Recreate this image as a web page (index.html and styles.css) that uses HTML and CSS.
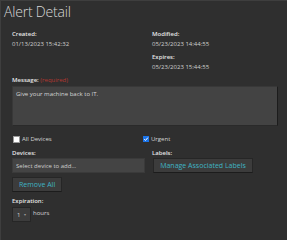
FILE: index.html
```html
<!DOCTYPE html>
<html lang="en">
<head>
  <meta charset="UTF-8" />
  <title>Alert Detail</title>
  <link rel="stylesheet" href="styles.css">
</head>
<body>
  <div class="panel">
    <h1>Alert Detail</h1>

    <div class="dates">
      <div class="col">
        <div class="field">
          <div class="label">Created:</div>
          <div class="value">01/13/2023 15:42:32</div>
        </div>
      </div>
      <div class="col">
        <div class="field">
          <div class="label">Modified:</div>
          <div class="value">05/23/2023 14:44:55</div>
        </div>
        <div class="field">
          <div class="label">Expires:</div>
          <div class="value">05/23/2023 15:44:55</div>
        </div>
      </div>
    </div>

    <div class="label">Message: <span class="required">(required)</span></div>
    <textarea class="message">Give your machine back to IT.</textarea>

    <div class="grid">
      <div class="check"><span class="box"></span> All Devices</div>
      <div class="check"><span class="box on">
        <svg viewBox="0 0 6 6" width="6" height="6"><path d="M1.2 3.2 L2.5 4.4 L4.9 1.6" fill="none" stroke="#fff" stroke-width="1"/></svg>
      </span> Urgent</div>

      <div>
        <div class="label">Devices:</div>
        <input class="text" type="text" placeholder="Select device to add..." />
        <button class="btn">Remove All</button>
      </div>
      <div class="labels">
        <div class="label">Labels:</div>
        <button class="btn wide">Manage Associated Labels</button>
      </div>
    </div>

    <div class="label">Expiration:</div>
    <div class="expire">
      <span class="select">1 <span class="caret">&#9662;</span></span>
      <span class="unit">hours</span>
    </div>
  </div>
</body>
</html>
```

FILE: styles.css
```css
body {
  margin: 0;
  background: #2f2f2f;
  font-family: "Open Sans", sans-serif;
  font-size: 6px;
  color: #d6d6d6;
}

.panel {
  height: 240px;
  box-sizing: border-box;
  border-top: 1px solid #3e3e3e;
  border-left: 1px solid #3e3e3e;
  padding: 1px 9px 0 11px;
}

h1 {
  margin: 0 0 0 -8px;
  font-size: 14px;
  font-weight: 300;
  color: #d8d8d8;
  letter-spacing: -0.2px;
}

.dates {
  display: grid;
  grid-template-columns: 140px 1fr;
  margin-top: 9px;
}

.field {
  margin-bottom: 5px;
}

.label {
  font-weight: 600;
  color: #e6e6e6;
  margin-bottom: 2px;
}

.value {
  color: #cfcfcf;
}

.required {
  color: #b5372f;
  font-weight: normal;
}

.message {
  display: block;
  width: 266px;
  height: 40px;
  box-sizing: border-box;
  margin: 1px 0 0;
  padding: 3px 3px;
  background: #434343;
  border: 1px solid #383838;
  border-right-color: #1c1c1c;
  border-bottom-color: #2a2a2a;
  color: #d6d6d6;
  font-family: inherit;
  font-size: 6px;
  resize: none;
}

.grid {
  display: grid;
  grid-template-columns: 131px 1fr;
  row-gap: 6px;
  margin-top: 9px;
  margin-bottom: 5px;
}

.grid .label {
  margin-bottom: 1px;
}

.check {
  display: flex;
  align-items: center;
  gap: 2px;
}

.box {
  display: inline-flex;
  width: 5px;
  height: 5px;
  margin-left: 1px;
  background: #fff;
  border: 0.5px solid #999;
}

.box.on {
  width: 6px;
  height: 6px;
  margin-left: 0;
  background: #1a73e8;
  border: none;
}

.labels {
  padding-left: 9px;
}

.text {
  display: block;
  width: 133px;
  height: 15px;
  box-sizing: border-box;
  margin: 0;
  padding: 0 3px;
  background: #444;
  border: 1px solid #3a3a3a;
  color: #d6d6d6;
  font-family: inherit;
  font-size: 6px;
}

.text::placeholder {
  color: #cfcfcf;
}

.btn {
  display: block;
  height: 15px;
  margin-top: 4px;
  padding: 0 6px;
  background: #3c3c3c;
  border: 1px solid #262626;
  border-bottom-color: #1c1c1c;
  color: #3fb4c4;
  font-family: inherit;
  font-size: 7px;
}

.wide {
  margin-top: 0;
  margin-left: 1px;
  width: 100px;
}

.expire {
  display: flex;
  align-items: center;
  gap: 2px;
}

.select {
  display: inline-flex;
  align-items: center;
  gap: 4px;
  width: 19px;
  height: 15px;
  box-sizing: border-box;
  padding-left: 4px;
  background: #3c3c3c;
  border: 1px solid #262626;
}

.caret {
  font-size: 4px;
  color: #999;
}

.unit {
  margin-top: -3px;
}
```
